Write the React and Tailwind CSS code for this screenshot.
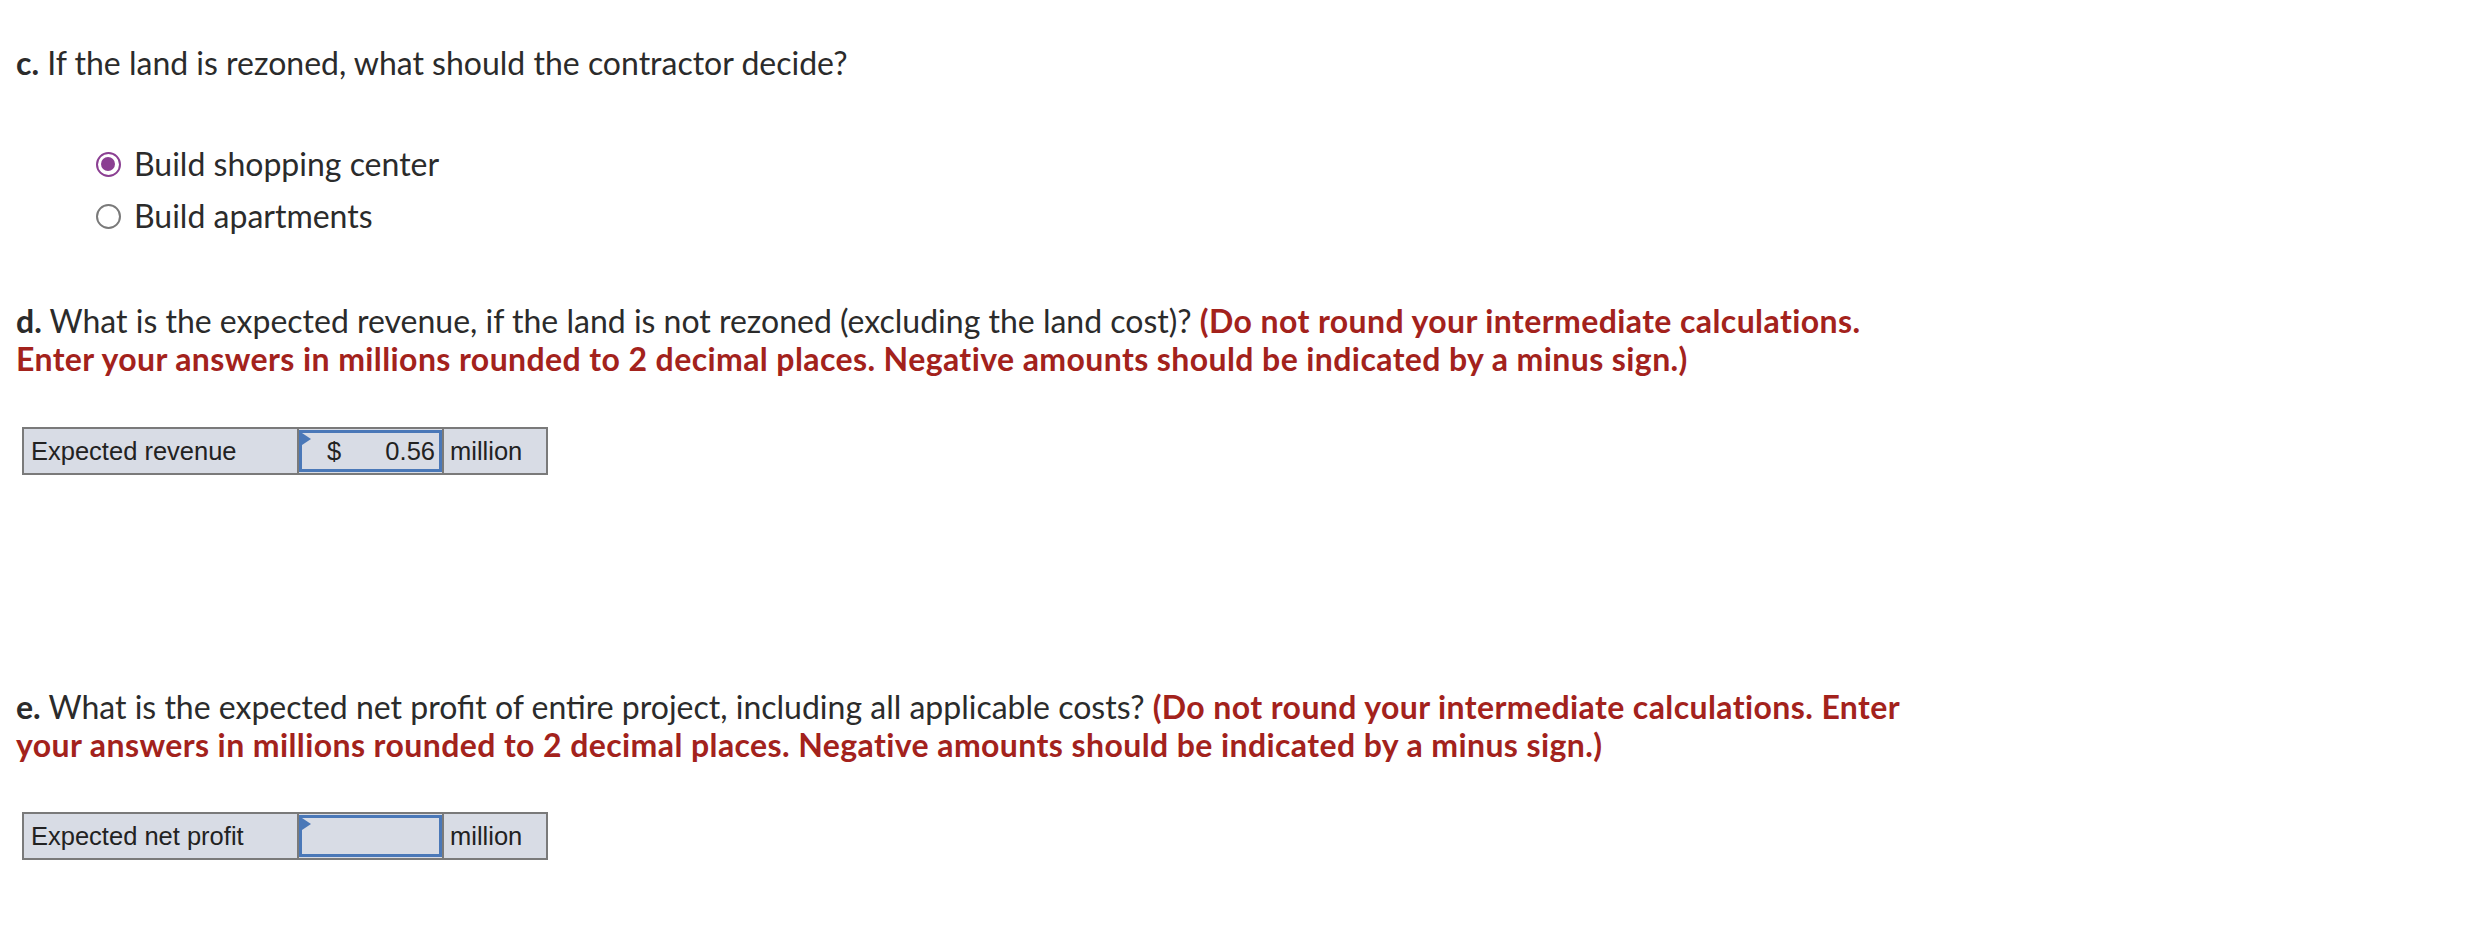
import React from 'react';

const red = 'font-bold tracking-[0.4px] text-[#a3221c]';

const Radio = ({ checked, label }) => (
  <div className="flex items-center h-[52px]">
    <div className="w-[50px] flex justify-center">
      {checked ? (
        <span className="w-[25px] h-[25px] rounded-full border-[2.5px] border-[#8b3f92] bg-white flex items-center justify-center">
          <span className="w-[14px] h-[14px] rounded-full bg-[#8b3f92]" />
        </span>
      ) : (
        <span className="w-[25px] h-[25px] rounded-full border-2 border-[#7a7a7a] bg-white" />
      )}
    </div>
    <span className="ml-[1px]">{label}</span>
  </div>
);

const AnswerRow = ({ label, value }) => (
  <table className="border-collapse font-['Liberation_Sans',Arial,sans-serif] text-[25.5px] text-[#222] ml-[22px]">
    <tbody>
      <tr className="h-[46px]">
        <td className="w-[275px] border-2 border-[#7a7a7a] bg-[#d8dce5] px-[7px] align-middle">{label}</td>
        <td className="w-[145px] border-2 border-[#7a7a7a] bg-[#d8dce5] p-0 align-middle">
          <div className="relative h-[42px] border-[3px] border-[#4a78b8] flex items-center justify-between pl-[25px] pr-[4px]">
            <span className="absolute left-0 top-0 w-0 h-0 border-t-[6px] border-b-[6px] border-l-[9px] border-t-transparent border-b-transparent border-l-[#4a78b8]" />
            {value ? (
              <>
                <span>$</span>
                <span>{value}</span>
              </>
            ) : null}
          </div>
        </td>
        <td className="w-[104px] border-2 border-[#7a7a7a] bg-[#d8dce5] px-[6px] align-middle">million</td>
      </tr>
    </tbody>
  </table>
);

export default function App() {
  return (
    <div className="w-[2476px] h-[952px] bg-white font-['Lato','Noto_Sans',sans-serif] text-[32px] leading-[38px] text-[#2b2b2b] overflow-hidden">
      <div className="pl-[16px] pt-[44px]">
        <p>
          <span className="font-bold">c.</span> If the land is rezoned, what should the contractor decide?
        </p>
      </div>

      <div className="pl-[83px] mt-[56px]">
        <Radio checked label="Build shopping center" />
        <Radio label="Build apartments" />
      </div>

      <div className="pl-[16px] mt-[60px]">
        <p>
          <span className="font-bold">d.</span> What is the expected revenue, if the land is not rezoned (excluding the land cost)?{' '}
          <span className={red}>(Do not round your intermediate calculations.</span>
          <br />
          <span className={red}>
            Enter your answers in millions rounded to 2 decimal places. Negative amounts should be indicated by a minus sign.)
          </span>
        </p>
      </div>

      <div className="mt-[49px]">
        <AnswerRow label="Expected revenue" value="0.56" />
      </div>

      <div className="pl-[16px] mt-[213px]">
        <p>
          <span className="font-bold">e.</span> What is the expected net profit of entire project, including all applicable costs?{' '}
          <span className={red}>(Do not round your intermediate calculations. Enter</span>
          <br />
          <span className={red}>
            your answers in millions rounded to 2 decimal places. Negative amounts should be indicated by a minus sign.)
          </span>
        </p>
      </div>

      <div className="mt-[48px]">
        <AnswerRow label="Expected net profit" />
      </div>
    </div>
  );
}
